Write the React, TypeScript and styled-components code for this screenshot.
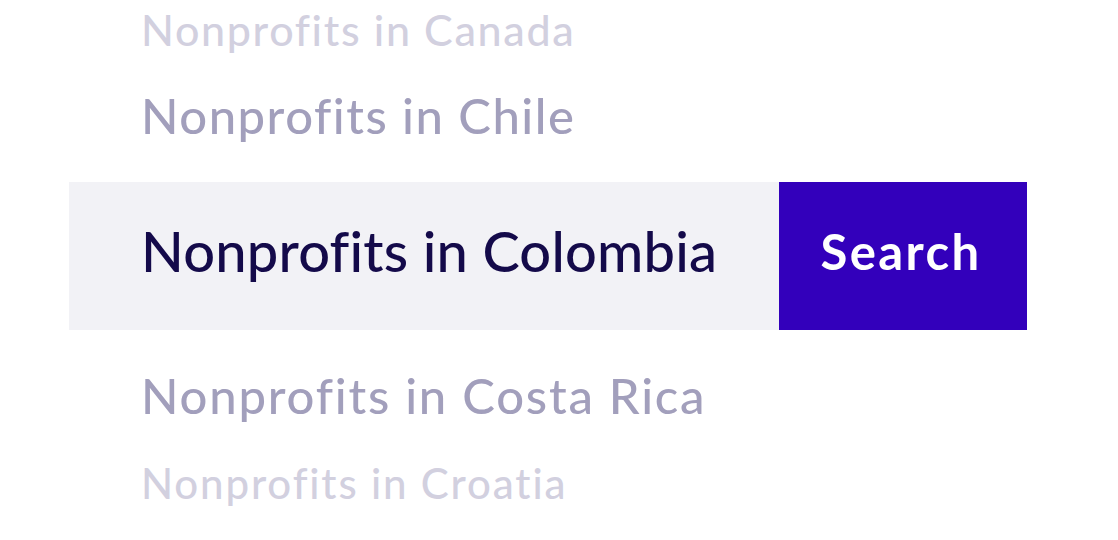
import React from "react";
import styled, { createGlobalStyle } from "styled-components";

const Global = createGlobalStyle`
  html, body { margin: 0; padding: 0; background: #ffffff; }
  body { font-family: "Lato", "Noto Sans", sans-serif; }
`;

const Page = styled.div`
  width: 1118px;
  height: 540px;
  overflow: hidden;
  display: flex;
  flex-direction: column;
  padding-left: 69px;
  box-sizing: border-box;
`;

type Tone = "faint" | "mid";

const Suggestion = styled.div<{ $tone: Tone; $size: number; $spacing: number; $top: number }>`
  margin-top: ${(p) => p.$top}px;
  height: ${(p) => p.$size}px;
  line-height: 1;
  padding-left: 72px;
  font-size: ${(p) => p.$size}px;
  letter-spacing: ${(p) => p.$spacing}px;
  font-weight: 500;
  font-variant-ligatures: none;
  white-space: nowrap;
  color: ${(p) => (p.$tone === "faint" ? "#d2d0df" : "#a29fbc")};
`;

const SearchBar = styled.div`
  display: flex;
  width: 958px;
  height: 148px;
  margin-top: 42.5px;
  flex-shrink: 0;
`;

const Field = styled.div`
  flex: 1;
  background: #f2f2f6;
  display: flex;
  align-items: center;
  padding: 0 0 12px 72px;
  font-size: 56px;
  font-weight: 500;
  letter-spacing: 0.2px;
  font-variant-ligatures: none;
  color: #140a4a;
  white-space: nowrap;
`;

const Button = styled.button`
  width: 248px;
  border: none;
  background: #3300bb;
  color: #ffffff;
  font-family: inherit;
  font-size: 49px;
  font-weight: 700;
  letter-spacing: 2.4px;
  display: flex;
  align-items: center;
  justify-content: center;
  padding: 0 4px 10px 0;
  cursor: pointer;
`;

export default function App() {
  return (
    <>
      <Global />
      <Page>
        <Suggestion $tone="faint" $size={43} $spacing={1.65} $top={8}>Nonprofits in Canada</Suggestion>
        <Suggestion $tone="mid" $size={49} $spacing={1.5} $top={39.5}>Nonprofits in Chile</Suggestion>
        <SearchBar>
          <Field>Nonprofits in Colombia</Field>
          <Button>Search</Button>
        </SearchBar>
        <Suggestion $tone="mid" $size={49} $spacing={1.78} $top={40.5}>Nonprofits in Costa Rica</Suggestion>
        <Suggestion $tone="faint" $size={42} $spacing={1.85} $top={42.2}>Nonprofits in Croatia</Suggestion>
      </Page>
    </>
  );
}
